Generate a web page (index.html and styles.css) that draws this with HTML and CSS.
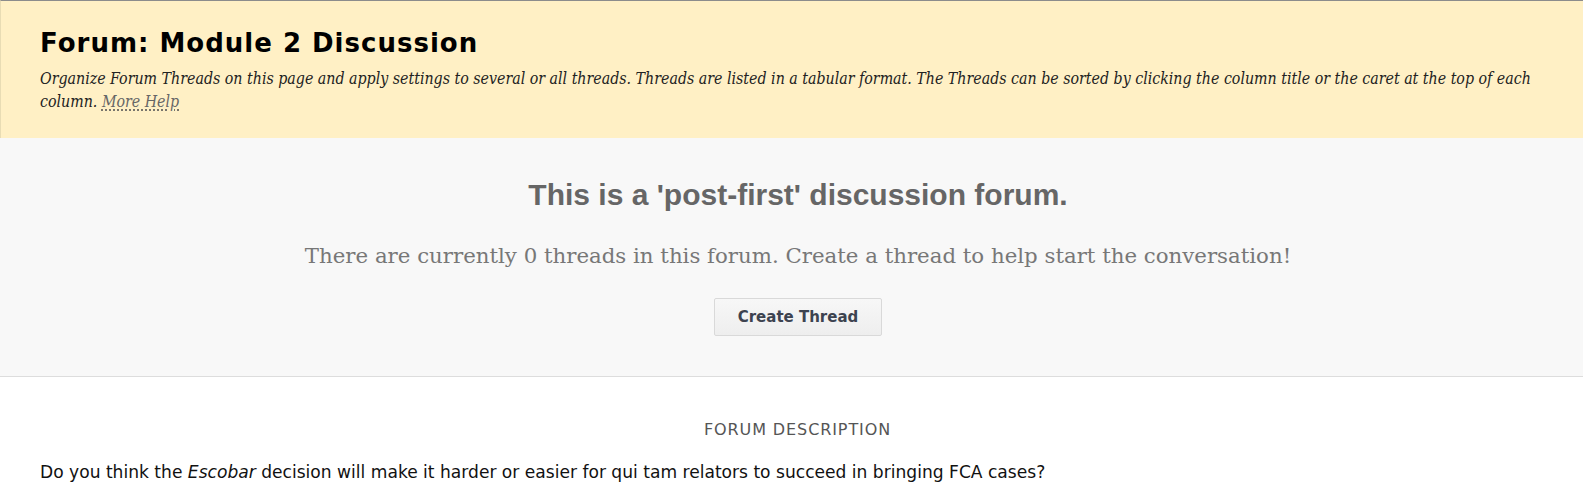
FILE: index.html
```html
<!DOCTYPE html>
<html lang="en">
  <head>
    <meta charset="UTF-8" />
    <meta name="viewport" content="width=device-width, initial-scale=1.0" />
    <title>Forum: Module 2 Discussion</title>
    <link rel="stylesheet" href="styles.css">
  </head>
  <body>
    <div class="page-header">
      <h1 class="page-title">Forum: Module 2 Discussion</h1>
      <p class="page-help">
        Organize Forum Threads on this page and apply settings to several or all threads. Threads are listed in a tabular format. The Threads can be sorted by clicking the column title or the caret at the top of each column.
        <a href="#" class="more-help">More Help</a>
      </p>
    </div>

    <div class="empty-forum">
      <h2 class="empty-title">This is a 'post-first' discussion forum.</h2>
      <p class="empty-text">There are currently 0 threads in this forum. Create a thread to help start the conversation!</p>
      <button class="btn-create">Create Thread</button>
    </div>

    <div class="forum-description">
      <h3 class="description-label">Forum Description</h3>
      <p class="description-text">Do you think the <em>Escobar</em> decision will make it harder or easier for qui tam relators to succeed in bringing FCA cases?</p>
    </div>
  </body>
</html>
```

FILE: styles.css
```css
body {
  margin: 0;
  font-family: "DejaVu Sans", Verdana, sans-serif;
  color: #111111;
  background-color: #ffffff;
}

/* Bandeau jaune du haut */
.page-header {
  background-color: #fff0c5;
  border-top: 1px solid #8c8c8c;
  border-left: 1px solid #e8dcb4;
  padding: 26px 30px 0 39px;
  height: 111px;
}

.page-title {
  margin: 0;
  font-size: 26px;
  line-height: 32px;
  font-weight: bold;
  letter-spacing: 1px;
  color: #000000;
}

.page-help {
  margin: 8px 0 0;
  font-family: "DejaVu Serif", Georgia, serif;
  font-stretch: condensed;
  font-style: italic;
  font-size: 15.8px;
  line-height: 23px;
  color: #222222;
}

.more-help {
  color: #666666;
  text-decoration: underline dotted #555555;
  text-underline-offset: 3px;
}

/* Zone grise : forum vide */
.empty-forum {
  background-color: #f8f8f8;
  border-bottom: 1px solid #dddddd;
  text-align: center;
  padding: 40px 0 40px 13px;
  height: 158px;
}

.empty-title {
  margin: 0;
  font-family: "Liberation Sans", Arial, sans-serif;
  font-size: 30px;
  line-height: 34px;
  font-weight: bold;
  color: #666666;
}

.empty-text {
  margin: 29px 0 0;
  font-family: "DejaVu Serif", Georgia, serif;
  font-size: 21.3px;
  line-height: 30px;
  color: #777777;
}

.btn-create {
  margin-top: 27px;
  width: 168px;
  height: 38px;
  border: 1px solid #d9d9d9;
  border-radius: 2px;
  background: linear-gradient(#f7f7f7, #eeeeee);
  font-family: "DejaVu Sans", Tahoma, sans-serif;
  font-size: 15px;
  font-weight: bold;
  color: #3d4350;
  cursor: pointer;
}

/* Description du forum */
.forum-description {
  padding: 43px 40px 0;
}

.description-label {
  margin: 0 0 0 12px;
  text-align: center;
  text-transform: uppercase;
  font-size: 16px;
  font-weight: normal;
  letter-spacing: 0.9px;
  line-height: 20px;
  color: #555555;
}

.description-text {
  margin: 22px 0 0;
  font-size: 17.1px;
  line-height: 20px;
  color: #111111;
}
```
